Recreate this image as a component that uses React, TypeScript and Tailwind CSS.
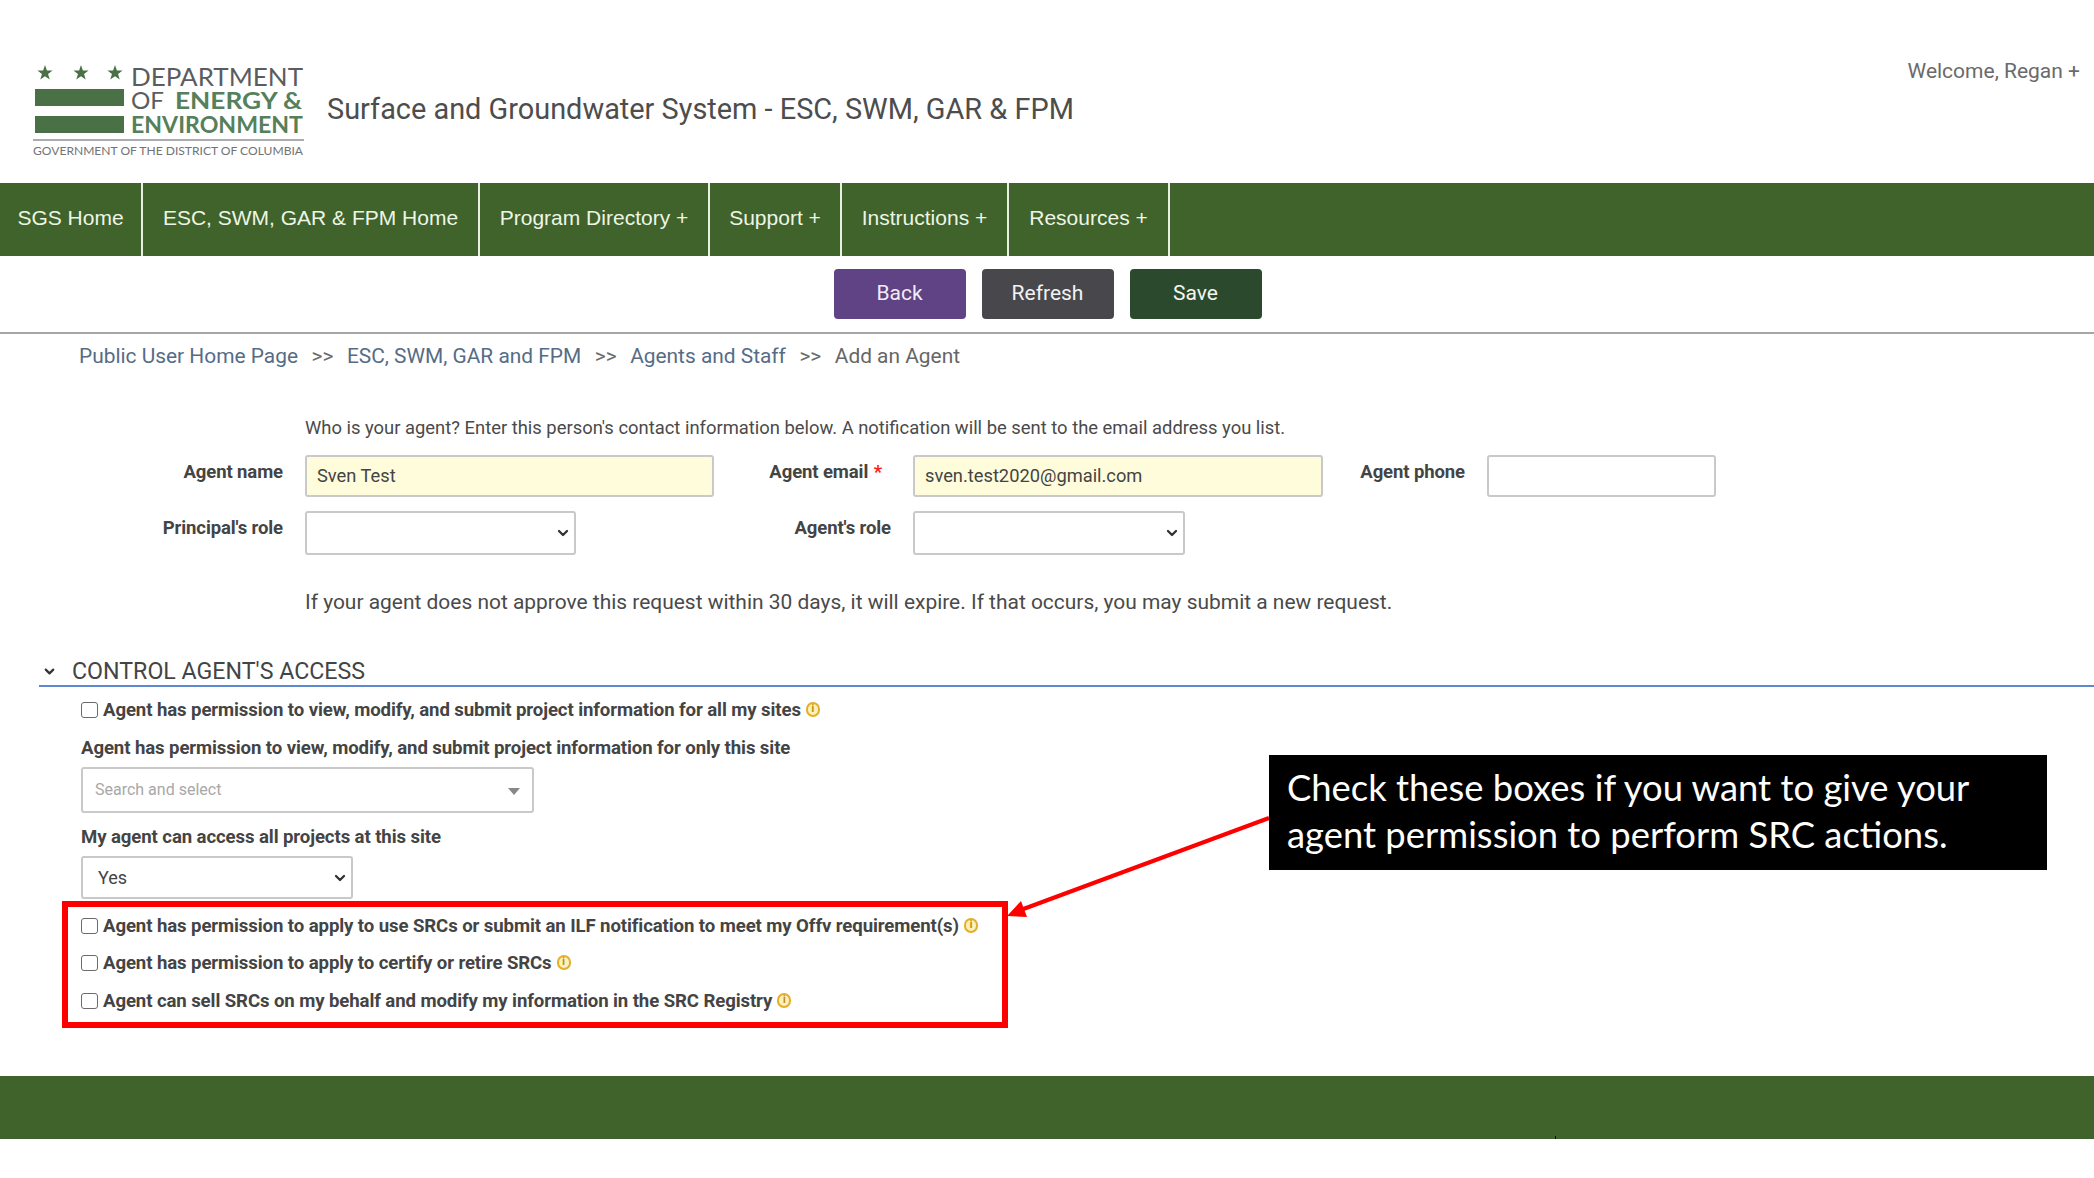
import React from "react";
import { ChevronDown } from "lucide-react";

const navItems = [
  { label: "SGS Home", width: "w-[143px]" },
  { label: "ESC, SWM, GAR & FPM Home", width: "w-[337px]" },
  { label: "Program Directory +", width: "w-[230px]" },
  { label: "Support +", width: "w-[132px]" },
  { label: "Instructions +", width: "w-[167px]" },
  { label: "Resources +", width: "w-[161px]" },
];

const Star = ({ x }: { x: number }) => {
  const pts = [];
  for (let i = 0; i < 10; i++) {
    const r = i % 2 === 0 ? 8 : 3.2;
    const a = -Math.PI / 2 + (i * Math.PI) / 5;
    pts.push(`${x + r * Math.cos(a)},${11 + r * Math.sin(a)}`);
  }
  return <polygon points={pts.join(" ")} fill="#4a7045" />;
};

function Logo() {
  return (
    <svg width="274" height="96" viewBox="0 0 274 96" className="shrink-0">
      <Star x={12} />
      <Star x={48} />
      <Star x={82} />
      <rect x="2" y="27" width="89" height="17" fill="#4a7045" />
      <rect x="2" y="54" width="89" height="17" fill="#4a7045" />
      <text x="98" y="24" fontFamily="Lato, sans-serif" fontSize="25" fill="#5a5c60" textLength="172" lengthAdjust="spacingAndGlyphs">DEPARTMENT</text>
      <text x="98" y="47" fontFamily="Lato, sans-serif" fontSize="23" fill="#5a5c60" textLength="33" lengthAdjust="spacingAndGlyphs">OF</text>
      <text x="142" y="47" fontFamily="Lato, sans-serif" fontWeight="700" fontSize="23" fill="#56805a" textLength="127" lengthAdjust="spacingAndGlyphs">ENERGY &amp;</text>
      <text x="98" y="71" fontFamily="Lato, sans-serif" fontWeight="700" fontSize="23" fill="#56805a" textLength="172" lengthAdjust="spacingAndGlyphs">ENVIRONMENT</text>
      <rect x="0" y="77" width="271" height="2" fill="#a9abad" />
      <text x="0" y="93" fontFamily="Lato, sans-serif" fontSize="11" fill="#717376" textLength="270" lengthAdjust="spacingAndGlyphs">GOVERNMENT OF THE DISTRICT OF COLUMBIA</text>
    </svg>
  );
}

function InfoDot() {
  return (
    <span className="ml-[5px] mb-[4px] inline-flex h-[15px] w-[14px] items-center justify-center rounded-full border-2 border-[#e3ae2a] bg-[#fdf0b8] text-[10px] leading-none font-bold text-[#b9860c]">
      i
    </span>
  );
}

function CheckRow({ label, className = "" }: { label: string; className?: string }) {
  return (
    <div className={`flex h-[22px] items-center ${className}`}>
      <span className="mr-[5px] mb-[3px] h-[16px] w-[17px] rounded-[3px] border border-[#6b6b6b] bg-white" />
      <span className="text-[18.6px] font-bold tracking-[-0.1px] text-[#444]">{label}</span>
      <InfoDot />
    </div>
  );
}

function SelectBox({ width, value = "", height = "h-[44px]" }: { width: string; value?: string; height?: string }) {
  return (
    <div className={`flex items-center rounded-[3px] border-2 border-[#c9c9c9] bg-white pl-[15px] pr-[3px] text-[18px] text-[#444] ${width} ${height}`}>
      {value}
      <ChevronDown size={16} strokeWidth={3.5} className="ml-auto text-[#333]" />
    </div>
  );
}

function FieldLabel({ children, width, className = "" }: { children: React.ReactNode; width: string; className?: string }) {
  return (
    <div className={`shrink-0 pr-[22px] text-right text-[18.5px] font-bold leading-[22px] tracking-[-0.1px] text-[#444] ${width} ${className}`}>
      {children}
    </div>
  );
}

function TextBox({ value, width, bg = "bg-[#fffcdc]" }: { value?: string; width: string; bg?: string }) {
  return (
    <div className={`flex h-[42px] shrink-0 items-center rounded-[3px] border-2 border-[#c9c9c9] pl-[10px] text-[18.3px] text-[#444] ${width} ${bg}`}>
      {value}
    </div>
  );
}

export default function App() {
  return (
    <div className="relative h-[1178px] w-[2094px] overflow-hidden bg-white font-['Roboto',sans-serif]">
      {/* header */}
      <header className="flex h-[183px] items-start pl-[33px] pt-[62px]">
        <Logo />
        <h1 className="ml-[20px] mt-[29px] text-[28.9px] font-normal leading-[36px] text-[#4d4d4d]">
          Surface and Groundwater System - ESC, SWM, GAR &amp; FPM
        </h1>
        <div className="ml-auto mr-[14px] -mt-[4px] text-[21px] leading-[26px] text-[#6a6a6a]">Welcome, Regan +</div>
      </header>

      <nav className="flex h-[73px] bg-[#3f632b] font-['Liberation_Sans',sans-serif]">
        {navItems.map((item) => (
          <div
            key={item.label}
            className={`flex items-center justify-center border-r-2 border-[#e8efe2] pb-[3px] text-[21px] text-[#eef5e6] ${item.width}`}
          >
            {item.label}
          </div>
        ))}
      </nav>

      {/* action buttons */}
      <div className="flex h-[78px] items-start justify-center gap-[16px] border-b-2 border-[#a6a6a6] pl-[1px] pt-[13px]">
        <button className="h-[50px] w-[132px] rounded-[4px] bg-[#5f4384] text-[21px] text-[#f1ecf6]">Back</button>
        <button className="h-[50px] w-[132px] rounded-[4px] bg-[#48484c] text-[21px] text-[#f2f2f2]">Refresh</button>
        <button className="h-[50px] w-[132px] rounded-[4px] bg-[#2b4a2d] text-[21px] text-[#f2f6f0]">Save</button>
      </div>

      {/* breadcrumb */}
      <div className="flex h-[42px] items-center gap-[13.5px] pl-[79px] pt-[4px] text-[20.9px] text-[#566c86]">
        <span>Public User Home Page</span>
        <span className="text-[#6a6a6a]">&gt;&gt;</span>
        <span>ESC, SWM, GAR and FPM</span>
        <span className="text-[#6a6a6a]">&gt;&gt;</span>
        <span>Agents and Staff</span>
        <span className="text-[#6a6a6a]">&gt;&gt;</span>
        <span className="text-[#666]">Add an Agent</span>
      </div>

      <main>
        <p className="ml-[305px] mt-[40px] text-[18.4px] leading-[24px] text-[#4a4a4a]">
          Who is your agent? Enter this person's contact information below. A notification will be sent to the email address you list.
        </p>

        <div className="mt-[15px] flex items-start">
          <FieldLabel width="w-[305px]" className="mt-[6px]">Agent name</FieldLabel>
          <TextBox value="Sven Test" width="w-[409px]" />
          <FieldLabel width="w-[199px]" className="mt-[6px]">
            Agent email <span className="ml-[1px] mr-[9px] text-[#ff1a1a]">*</span>
          </FieldLabel>
          <TextBox value="sven.test2020@gmail.com" width="w-[410px]" />
          <FieldLabel width="w-[164px]" className="mt-[6px]">Agent phone</FieldLabel>
          <TextBox width="w-[229px]" bg="bg-white" />
        </div>

        <div className="mt-[14px] flex items-start">
          <FieldLabel width="w-[305px]" className="mt-[6px]">Principal's role</FieldLabel>
          <SelectBox width="w-[271px]" />
          <FieldLabel width="w-[337px]" className="mt-[6px]">Agent's role</FieldLabel>
          <SelectBox width="w-[272px]" />
        </div>

        <p className="ml-[305px] mt-[34px] text-[20.95px] leading-[26px] text-[#4a4a4a]">
          If your agent does not approve this request within 30 days, it will expire. If that occurs, you may submit a new request.
        </p>

        {/* access section */}
        <div className="ml-[39px] mt-[43px] flex h-[29px] items-center border-b-2 border-[#5d87cf] text-[23.2px] text-[#444]">
          <ChevronDown size={15} strokeWidth={3.5} className="ml-[3px] mr-[15px] text-[#333]" />
          CONTROL AGENT'S ACCESS
        </div>

        <div className="pl-[81px]">
          <CheckRow className="mt-[13px]" label="Agent has permission to view, modify, and submit project information for all my sites" />
          <div className="mt-[15px] text-[18.6px] font-bold leading-[22px] tracking-[-0.1px] text-[#444]">
            Agent has permission to view, modify, and submit project information for only this site
          </div>
          <div className="mt-[8px] flex h-[46px] w-[453px] items-center rounded-[3px] border-2 border-[#c9c9c9] pl-[12px] pr-[12px] text-[16px] text-[#a8a8a8]">
            Search and select
            <span className="ml-auto mt-[2px] h-0 w-0 border-x-[6px] border-t-[7px] border-x-transparent border-t-[#888]" />
          </div>
          <div className="mt-[13px] text-[18.6px] font-bold leading-[22px] tracking-[-0.1px] text-[#444]">
            My agent can access all projects at this site
          </div>
          <div className="mt-[8px]">
            <SelectBox width="w-[272px]" value="Yes" height="h-[43px]" />
          </div>
          <CheckRow className="mt-[17px]" label="Agent has permission to apply to use SRCs or submit an ILF notification to meet my Offv requirement(s)" />
          <CheckRow className="mt-[15px]" label="Agent has permission to apply to certify or retire SRCs" />
          <CheckRow className="mt-[16px]" label="Agent can sell SRCs on my behalf and modify my information in the SRC Registry" />
        </div>
      </main>

      <footer className="absolute left-0 right-0 top-[1076px] h-[63px] bg-[#3f632b]" />
      <span className="absolute left-[1555px] top-[1136px] h-[3px] w-[1px] bg-black" />

      {/* slide annotations */}
      <div className="absolute left-[62px] top-[901px] h-[127px] w-[946px] border-[6px] border-[#ff0000]" />
      <svg className="absolute left-[1000px] top-[810px]" width="280" height="120" viewBox="0 0 280 120">
        <line x1="269" y1="8" x2="18" y2="101" stroke="#ff0000" strokeWidth="4" />
        <polygon points="7,106 21,91 27,107" fill="#ff0000" />
      </svg>
      <div className="absolute left-[1269px] top-[755px] h-[115px] w-[778px] bg-black pl-[18px] pt-[9px] font-['Lato',sans-serif] text-[36.4px] leading-[47px] text-white">
        Check these boxes if you want to give your
        <br />
        agent permission to perform SRC actions.
      </div>
    </div>
  );
}
